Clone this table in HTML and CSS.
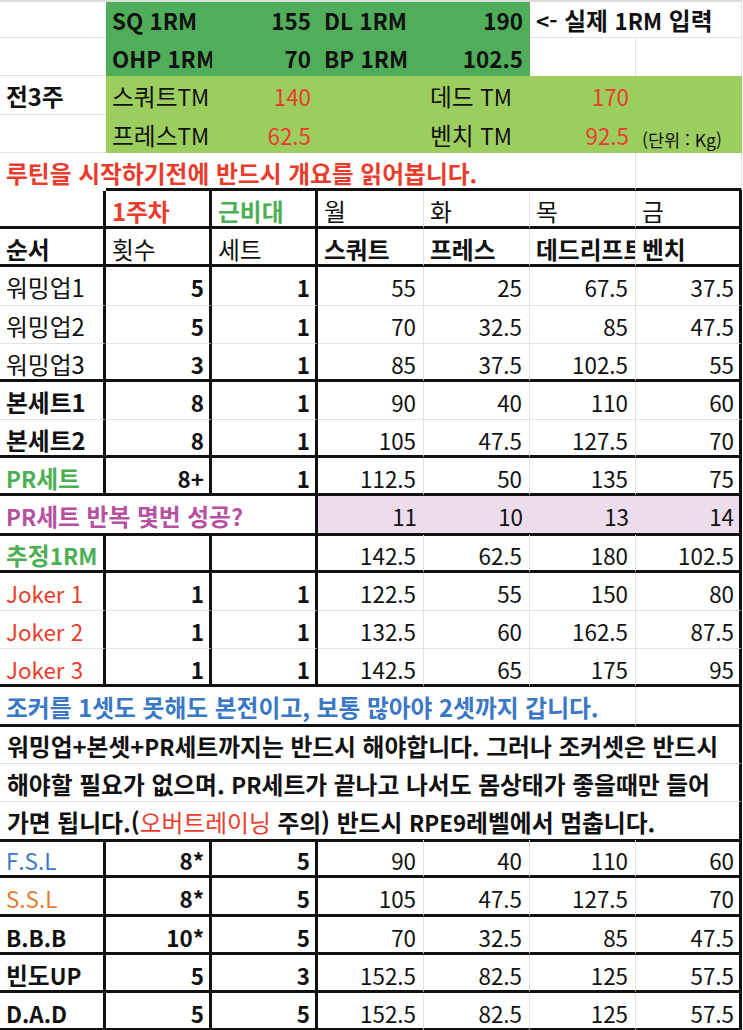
FILE: index.html
```html
<!DOCTYPE html>
<html lang="ko">
<head>
<meta charset="utf-8">
<title>5/3/1 루틴</title>
<link rel="stylesheet" href="styles.css">
</head>
<body>
<div class="sheet">
  <div class="row first">
    <div class="c gb"></div>
    <div class="c dg b lat">SQ 1RM</div>
    <div class="c dg b num">155</div>
    <div class="c dg b lat">DL 1RM</div>
    <div class="c dg b num">190</div>
    <div class="c b ov gb"><span class="l">&lt;-</span> 실제 <span class="l">1RM</span> 입력</div>
    <div class="c gb gr"></div>
  </div>
  <div class="row">
    <div class="c gb"></div>
    <div class="c dg b lat">OHP 1RM</div>
    <div class="c dg b num">70</div>
    <div class="c dg b lat">BP 1RM</div>
    <div class="c dg b num">102.5</div>
    <div class="c gr"></div>
    <div class="c gr"></div>
  </div>
  <div class="row">
    <div class="c b gb">전3주</div>
    <div class="c lg">스쿼트<span class="l">TM</span></div>
    <div class="c lg num red">140</div>
    <div class="c lg"></div>
    <div class="c lg">데드 <span class="l">TM</span></div>
    <div class="c lg num red">170</div>
    <div class="c lg"></div>
  </div>
  <div class="row">
    <div class="c gb"></div>
    <div class="c lg">프레스<span class="l">TM</span></div>
    <div class="c lg num red">62.5</div>
    <div class="c lg"></div>
    <div class="c lg">벤치 <span class="l">TM</span></div>
    <div class="c lg num red">92.5</div>
    <div class="c lg unit">(단위 : Kg)</div>
  </div>
  <div class="row">
    <div class="c b red ov">루틴을 시작하기전에 반드시 개요를 읽어봅니다.</div>
    <div class="c span4 tb"></div>
    <div class="c gr tb"></div>
    <div class="c gr tb"></div>
  </div>

  <div class="row thick">
    <div class="c tr"></div>
    <div class="c tr b red">1주차</div>
    <div class="c tr b green">근비대</div>
    <div class="c gr">월</div>
    <div class="c gr">화</div>
    <div class="c gr">목</div>
    <div class="c tr">금</div>
  </div>
  <div class="row thick">
    <div class="c tr b">순서</div>
    <div class="c tr">횟수</div>
    <div class="c tr">세트</div>
    <div class="c gr b">스쿼트</div>
    <div class="c gr b">프레스</div>
    <div class="c gr b">데드리프트</div>
    <div class="c tr b">벤치</div>
  </div>

  <div class="row thin">
    <div class="c tr">워밍업1</div>
    <div class="c tr b num">5</div>
    <div class="c tr b num">1</div>
    <div class="c gr num">55</div>
    <div class="c gr num">25</div>
    <div class="c gr num">67.5</div>
    <div class="c tr num">37.5</div>
  </div>
  <div class="row thin">
    <div class="c tr">워밍업2</div>
    <div class="c tr b num">5</div>
    <div class="c tr b num">1</div>
    <div class="c gr num">70</div>
    <div class="c gr num">32.5</div>
    <div class="c gr num">85</div>
    <div class="c tr num">47.5</div>
  </div>
  <div class="row thick">
    <div class="c tr">워밍업3</div>
    <div class="c tr b num">3</div>
    <div class="c tr b num">1</div>
    <div class="c gr num">85</div>
    <div class="c gr num">37.5</div>
    <div class="c gr num">102.5</div>
    <div class="c tr num">55</div>
  </div>

  <div class="row thin">
    <div class="c tr b">본세트1</div>
    <div class="c tr b num">8</div>
    <div class="c tr b num">1</div>
    <div class="c gr num">90</div>
    <div class="c gr num">40</div>
    <div class="c gr num">110</div>
    <div class="c tr num">60</div>
  </div>
  <div class="row thick">
    <div class="c tr b">본세트2</div>
    <div class="c tr b num">8</div>
    <div class="c tr b num">1</div>
    <div class="c gr num">105</div>
    <div class="c gr num">47.5</div>
    <div class="c gr num">127.5</div>
    <div class="c tr num">70</div>
  </div>
  <div class="row thick">
    <div class="c tr b green"><span class="l">PR</span>세트</div>
    <div class="c tr b num">8+</div>
    <div class="c tr b num">1</div>
    <div class="c gr num">112.5</div>
    <div class="c gr num">50</div>
    <div class="c gr num">135</div>
    <div class="c tr num">75</div>
  </div>
  <div class="row thick">
    <div class="c span3 tr b purple"><span class="l">PR</span>세트 반복 몇번 성공?</div>
    <div class="c pink num">11</div>
    <div class="c pink num">10</div>
    <div class="c pink num">13</div>
    <div class="c pink tr num">14</div>
  </div>
  <div class="row thick">
    <div class="c tr b green">추정<span class="l">1RM</span></div>
    <div class="c tr"></div>
    <div class="c tr"></div>
    <div class="c gr num">142.5</div>
    <div class="c gr num">62.5</div>
    <div class="c gr num">180</div>
    <div class="c tr num">102.5</div>
  </div>

  <div class="row thin">
    <div class="c tr red lat">Joker 1</div>
    <div class="c tr b num">1</div>
    <div class="c tr b num">1</div>
    <div class="c gr num">122.5</div>
    <div class="c gr num">55</div>
    <div class="c gr num">150</div>
    <div class="c tr num">80</div>
  </div>
  <div class="row thin">
    <div class="c tr red lat">Joker 2</div>
    <div class="c tr b num">1</div>
    <div class="c tr b num">1</div>
    <div class="c gr num">132.5</div>
    <div class="c gr num">60</div>
    <div class="c gr num">162.5</div>
    <div class="c tr num">87.5</div>
  </div>
  <div class="row thick">
    <div class="c tr red lat">Joker 3</div>
    <div class="c tr b num">1</div>
    <div class="c tr b num">1</div>
    <div class="c gr num">142.5</div>
    <div class="c gr num">65</div>
    <div class="c gr num">175</div>
    <div class="c tr num">95</div>
  </div>

  <div class="row thick">
    <div class="c span6 gr b blue">조커를 1셋도 못해도 본전이고, 보통 많아야 2셋까지 갑니다.</div>
    <div class="c tr"></div>
  </div>
  <div class="row thin">
    <div class="c span7 tr b para">워밍업+본셋+<span class="l">PR</span>세트까지는 반드시 해야합니다. 그러나 조커셋은 반드시</div>
  </div>
  <div class="row thin">
    <div class="c span7 tr b para">해야할 필요가 없으며. <span class="l">PR</span>세트가 끝나고 나서도 몸상태가 좋을때만 들어</div>
  </div>
  <div class="row thick">
    <div class="c span7 tr b para">가면 됩니다.(<span class="red n">오버트레이닝</span> 주의) 반드시 <span class="l">RPE9</span>레벨에서 멈춥니다.</div>
  </div>

  <div class="row thick">
    <div class="c tr blue lat">F.S.L</div>
    <div class="c tr b num">8*</div>
    <div class="c tr b num">5</div>
    <div class="c gr num">90</div>
    <div class="c gr num">40</div>
    <div class="c gr num">110</div>
    <div class="c tr num">60</div>
  </div>
  <div class="row thick">
    <div class="c tr orange lat">S.S.L</div>
    <div class="c tr b num">8*</div>
    <div class="c tr b num">5</div>
    <div class="c gr num">105</div>
    <div class="c gr num">47.5</div>
    <div class="c gr num">127.5</div>
    <div class="c tr num">70</div>
  </div>
  <div class="row thick">
    <div class="c tr b lat">B.B.B</div>
    <div class="c tr b num">10*</div>
    <div class="c tr b num">5</div>
    <div class="c gr num">70</div>
    <div class="c gr num">32.5</div>
    <div class="c gr num">85</div>
    <div class="c tr num">47.5</div>
  </div>
  <div class="row thick">
    <div class="c tr b">빈도<span class="l">UP</span></div>
    <div class="c tr b num">5</div>
    <div class="c tr b num">3</div>
    <div class="c gr num">152.5</div>
    <div class="c gr num">82.5</div>
    <div class="c gr num">125</div>
    <div class="c tr num">57.5</div>
  </div>
  <div class="row thick">
    <div class="c tr b lat">D.A.D</div>
    <div class="c tr b num">5</div>
    <div class="c tr b num">5</div>
    <div class="c gr num">152.5</div>
    <div class="c gr num">82.5</div>
    <div class="c gr num">125</div>
    <div class="c tr num">57.5</div>
  </div>
</div>
</body>
</html>
```

FILE: styles.css
```css
* {
  box-sizing: border-box;
}

body {
  margin: 0;
  background: #ffffff;
  color: #111111;
  font-family: "Noto Sans CJK KR", "Noto Sans", sans-serif;
  font-size: 23.75px;
}

.sheet {
  width: 743px;
}

.row {
  display: grid;
  grid-template-columns: repeat(7, 106px);
  height: 38.2px;
}

.row.first > .c {
  border-top: 2px solid #dcdcdc;
}

.c {
  padding: 3px 5px 0 6px;
  line-height: 34px;
  white-space: nowrap;
  overflow: hidden;
}

.row.first > .c {
  padding-top: 1px;
}

/* Latin text and figures are set a touch smaller than hangul */
.lat,
.num,
.l {
  font-size: 22.4px;
}

.num {
  text-align: right;
  padding-right: 7px;
}

.tr.num {
  padding-right: 5px;
}

.b { font-weight: 700; }
.n { font-weight: 400; }
.ov { overflow: visible; }

.span3 { grid-column: span 3; overflow: visible; }
.span4 { grid-column: span 4; }
.span6 { grid-column: span 6; overflow: visible; }
.span7 { grid-column: span 7; overflow: visible; }

/* fills */
.dg { background: #50ae5b; }
.lg { background: #9ccd5f; }
.pink { background: #ecdcec; }

/* text colours */
.red { color: #ea3c2d; }
.green { color: #4caf54; }
.purple { color: #b6519f; }
.blue { color: #3a78c6; }
.orange { color: #e27a2f; }

.unit {
  font-size: 17.5px;
  line-height: 26px;
  padding-top: 12px;
  padding-left: 6px;
}

.para {
  padding-left: 7px;
}

/* grid lines */
.gb { border-bottom: 1px solid #e2e2e2; }
.gr { border-right: 1px solid #e2e2e2; }
.tr { border-right: 3px solid #111111; }
.tb { border-bottom: 3px solid #111111; }

.row.thin > .c { border-bottom: 1px solid #e2e2e2; }
.row.thick > .c { border-bottom: 3px solid #111111; }
```
